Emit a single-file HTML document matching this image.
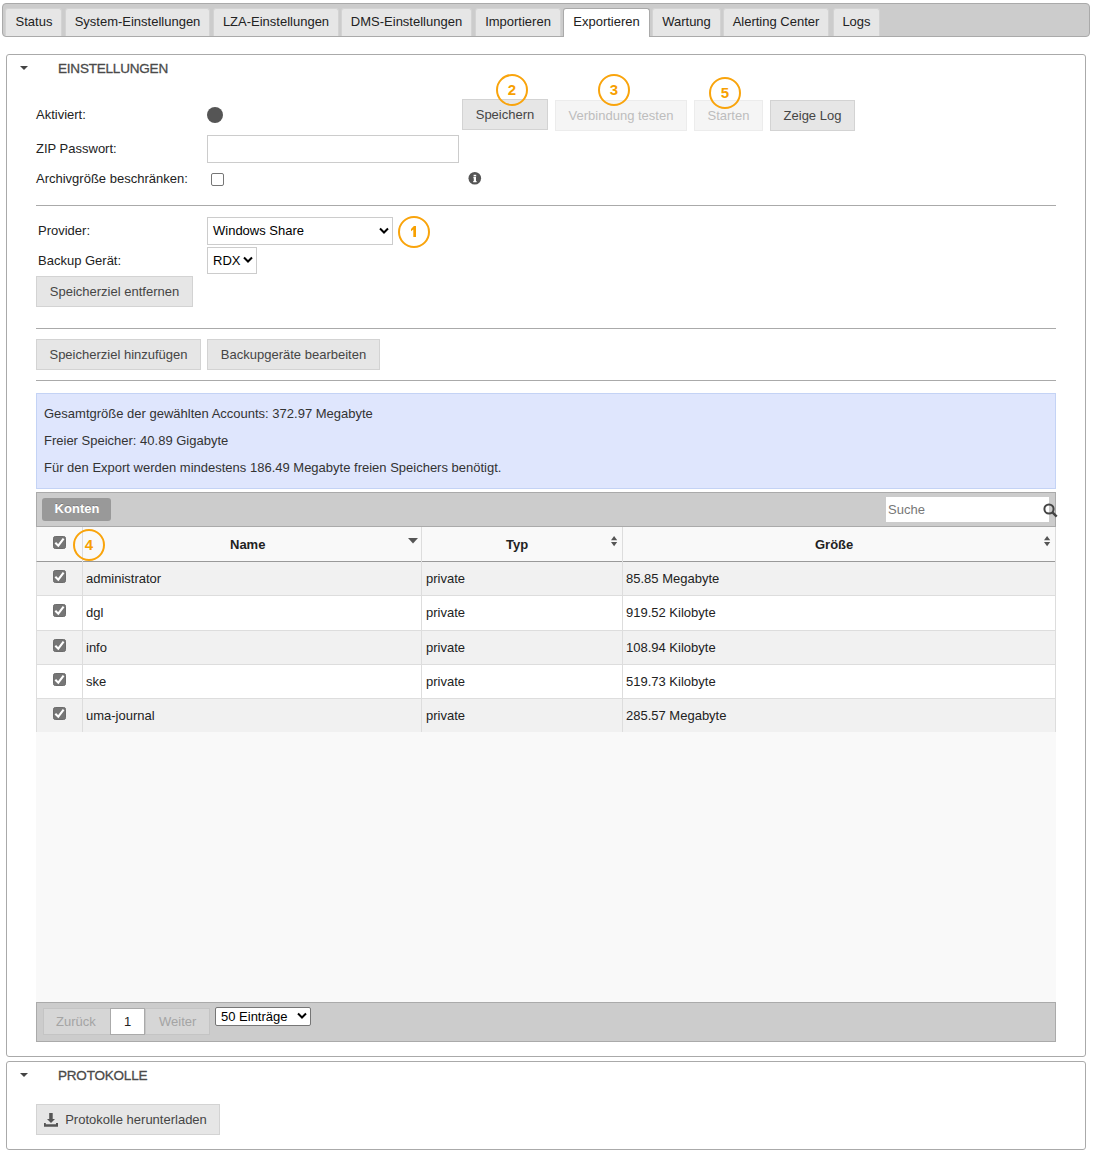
<!DOCTYPE html>
<html><head><meta charset="utf-8">
<style>
*{box-sizing:border-box;margin:0;padding:0}
html,body{width:1093px;height:1161px;overflow:hidden;background:#fff}
body{font-family:"Liberation Sans",sans-serif;font-size:13px;color:#222;position:relative}
.a{position:absolute}
.t{position:absolute;white-space:nowrap;line-height:15px}
#tabbar{left:2px;top:3px;width:1088px;height:34px;background:#ccc;border:1px solid #aaa;border-radius:4px}
.tab{position:absolute;top:8px;height:28px;background:#e6e6e6;border:1px solid #d3d3d3;border-bottom:0;border-radius:3px 3px 0 0;color:#222;text-align:center;line-height:15px;padding-top:5px;white-space:nowrap}
.tab.act{background:#fff;border-color:#aaa;height:29px}
.box{position:absolute;left:6px;width:1080px;border:1px solid #aaa;border-radius:3px;background:#fff}
.tri{position:absolute;width:0;height:0;border-left:4px solid transparent;border-right:4px solid transparent;border-top:4.5px solid #444}
.sect{position:absolute;font-size:13.5px;letter-spacing:-0.2px;-webkit-text-stroke:0.3px #4a4a4a;color:#4a4a4a;line-height:15px;white-space:nowrap}
.btn{position:absolute;background:#e6e6e6;border:1px solid #d3d3d3;color:#454545;text-align:center;line-height:15px;white-space:nowrap;padding-top:7px}
.btn.dis{background:#f5f5f5;border-color:#ececec;color:#bdbdbd}
.hr{position:absolute;left:36px;width:1020px;height:1px;background:#aaa}
.ann{position:absolute;width:32px;height:32px;border:2px solid #f9a40c;border-radius:50%;color:#f7a000;font-weight:bold;font-size:15px;text-align:center;line-height:28px}
.inp{position:absolute;background:#fff;border:1px solid #ccc}
.sel{position:absolute;background:#fff;border:1px solid #ccc;color:#000;line-height:15px;white-space:nowrap}
.chev{position:absolute}
.row{position:absolute;left:36px;width:1020px;height:34px}
.cb{position:absolute;width:13px;height:13px;background:#6f6f6f;border-radius:2px}
.cell{position:absolute;white-space:nowrap;line-height:15px;color:#222}
.vsep{position:absolute;width:1px;background:#ddd}
</style></head><body>

<!-- Tab bar -->
<div id="tabbar" class="a"></div>
<div class="tab" style="left:5px;width:57px;padding-left:1px">Status</div>
<div class="tab" style="left:65px;width:145px">System-Einstellungen</div>
<div class="tab" style="left:213px;width:126px">LZA-Einstellungen</div>
<div class="tab" style="left:341px;width:131px">DMS-Einstellungen</div>
<div class="tab" style="left:475px;width:86px">Importieren</div>
<div class="tab act" style="left:563px;width:87px">Exportieren</div>
<div class="tab" style="left:652px;width:69px">Wartung</div>
<div class="tab" style="left:723px;width:106px">Alerting Center</div>
<div class="tab" style="left:833px;width:47px">Logs</div>

<!-- Section 1 -->
<div class="box" style="top:54px;height:1003px"></div>
<div class="tri" style="left:20px;top:66px"></div>
<div class="sect" style="left:58px;top:61px">EINSTELLUNGEN</div>

<div class="t" style="left:36px;top:107px">Aktiviert:</div>
<div class="a" style="left:207px;top:107px;width:16px;height:16px;border-radius:50%;background:#555"></div>
<div class="t" style="left:36px;top:141px">ZIP Passwort:</div>
<div class="inp" style="left:207px;top:135px;width:252px;height:28px"></div>
<div class="t" style="left:36px;top:171px">Archivgröße beschränken:</div>
<div class="a" style="left:211px;top:173px;width:13px;height:13px;border:1px solid #767676;border-radius:2px;background:#fff"></div>
<svg class="a" style="left:468px;top:171px" width="14" height="14" viewBox="0 0 14 14"><circle cx="6.8" cy="7.2" r="6.3" fill="#555"/><rect x="5.6" y="3.8" width="2.6" height="1.6" fill="#fff"/><path d="M5.4 6h2.6v3.9h0.6v1.3H5.2V9.9h0.6V7.2h-0.4z" fill="#fff"/></svg>

<div class="btn" style="left:462px;top:99px;width:86px;height:31px">Speichern</div>
<div class="btn dis" style="left:555px;top:100px;width:132px;height:31px">Verbindung testen</div>
<div class="btn dis" style="left:694px;top:100px;width:69px;height:31px">Starten</div>
<div class="btn" style="left:770px;top:100px;width:85px;height:31px">Zeige Log</div>

<div class="hr" style="top:205px"></div>

<div class="t" style="left:38px;top:223px">Provider:</div>
<div class="sel" style="left:207px;top:217px;width:186px;height:28px;padding:5px 0 0 5px">Windows Share</div>
<svg class="a" style="left:379px;top:227px" width="10" height="8" viewBox="0 0 10 8"><path d="M1 1.5l4 4 4-4" fill="none" stroke="#000" stroke-width="2"/></svg>
<div class="t" style="left:38px;top:253px">Backup Gerät:</div>
<div class="sel" style="left:207px;top:247px;width:50px;height:27px;padding:5px 0 0 5px">RDX</div>
<svg class="a" style="left:243px;top:256px" width="10" height="8" viewBox="0 0 10 8"><path d="M1 1.5l4 4 4-4" fill="none" stroke="#000" stroke-width="2"/></svg>
<div class="btn" style="left:36px;top:276px;width:157px;height:31px">Speicherziel entfernen</div>

<div class="hr" style="top:328px"></div>
<div class="btn" style="left:36px;top:339px;width:165px;height:31px">Speicherziel hinzufügen</div>
<div class="btn" style="left:207px;top:339px;width:173px;height:31px">Backupgeräte bearbeiten</div>
<div class="hr" style="top:380px"></div>

<!-- Info box -->
<div class="a" style="left:36px;top:393px;width:1020px;height:96px;background:#dfe6fd;border:1px solid #c4d3f5"></div>
<div class="t" style="left:44px;top:406px;color:#333">Gesamtgröße der gewählten Accounts: 372.97 Megabyte</div>
<div class="t" style="left:44px;top:433px;color:#333">Freier Speicher: 40.89 Gigabyte</div>
<div class="t" style="left:44px;top:460px;color:#333">Für den Export werden mindestens 186.49 Megabyte freien Speichers benötigt.</div>

<!-- Table toolbar -->
<div class="a" style="left:36px;top:492px;width:1020px;height:35px;background:#ccc;border:1px solid #aaa"></div>
<div class="a" style="left:42px;top:498px;width:69px;height:23px;background:#999;border-radius:3px;color:#fff;font-weight:bold;text-align:center;line-height:15px;padding-top:3px;padding-left:1px;text-shadow:0 -1px 0 rgba(0,0,0,.2)">Konten</div>
<div class="a" style="left:886px;top:497px;width:163px;height:25px;background:#fff"></div>
<div class="t" style="left:888px;top:502px;color:#777">Suche</div>
<svg class="a" style="left:1043px;top:503px" width="16" height="15" viewBox="0 0 16 15"><circle cx="6" cy="6" r="4.6" fill="none" stroke="#444" stroke-width="2"/><path d="M9.2 9.2l4.5 4.5" stroke="#444" stroke-width="2.4"/></svg>

<!-- Header -->
<div class="a" style="left:36px;top:527px;width:1020px;height:35px;background:#f9f9f9;border-bottom:1px solid #999;border-left:1px solid #ddd"></div>
<svg class="a" style="left:53px;top:536px" width="13" height="13" viewBox="0 0 13 13"><rect x="0.5" y="0.5" width="12" height="12" rx="1.8" fill="#767676" stroke="#6c6c6c"/><path d="M2.3 6.7l3 3L10.6 2.7" fill="none" stroke="#fff" stroke-width="2.1"/></svg>
<div class="t" style="left:230px;top:537px;font-weight:bold">Name</div>
<div class="t" style="left:506px;top:537px;font-weight:bold">Typ</div>
<div class="t" style="left:815px;top:537px;font-weight:bold">Größe</div>


<svg class="a" style="left:408px;top:538px" width="10" height="6" viewBox="0 0 10 6"><path d="M0 0h10L5 5.4z" fill="#555"/></svg>
<svg class="a" style="left:611px;top:535px" width="7" height="12" viewBox="0 0 7 12"><path d="M0 5.2L3.1 1 6.2 5.2z M0 7H6.2L3.1 11.2z" fill="#555"/></svg>
<svg class="a" style="left:1044px;top:535px" width="7" height="12" viewBox="0 0 7 12"><path d="M0 5.2L3.1 1 6.2 5.2z M0 7H6.2L3.1 11.2z" fill="#555"/></svg>
<!-- rows -->
<div class="a" style="left:36px;top:562px;width:1020px;height:34px;background:#f1f1f1;border-bottom:1px solid #ddd;border-left:1px solid #ddd"></div>
<div class="a" style="left:36px;top:596px;width:1020px;height:35px;background:#fff;border-bottom:1px solid #ddd;border-left:1px solid #ddd"></div>
<div class="a" style="left:36px;top:631px;width:1020px;height:34px;background:#f1f1f1;border-bottom:1px solid #ddd;border-left:1px solid #ddd"></div>
<div class="a" style="left:36px;top:665px;width:1020px;height:34px;background:#fff;border-bottom:1px solid #ddd;border-left:1px solid #ddd"></div>
<div class="a" style="left:36px;top:699px;width:1020px;height:33px;background:#f1f1f1;border-left:1px solid #ddd"></div>
<div class="a" style="left:36px;top:732px;width:1020px;height:270px;background:#f9f9f9"></div>

<div class="vsep" style="left:82px;top:527px;height:205px"></div>
<div class="vsep" style="left:421px;top:527px;height:205px"></div>
<div class="vsep" style="left:622px;top:527px;height:205px"></div>
<svg class="a" style="left:53px;top:570px" width="13" height="13" viewBox="0 0 13 13"><rect x="0.5" y="0.5" width="12" height="12" rx="1.8" fill="#767676" stroke="#6c6c6c"/><path d="M2.3 6.7l3 3L10.6 2.7" fill="none" stroke="#fff" stroke-width="2.1"/></svg>
<div class="cell" style="left:86px;top:571px">administrator</div>
<div class="cell" style="left:426px;top:571px">private</div>
<div class="cell" style="left:626px;top:571px">85.85 Megabyte</div>
<svg class="a" style="left:53px;top:604px" width="13" height="13" viewBox="0 0 13 13"><rect x="0.5" y="0.5" width="12" height="12" rx="1.8" fill="#767676" stroke="#6c6c6c"/><path d="M2.3 6.7l3 3L10.6 2.7" fill="none" stroke="#fff" stroke-width="2.1"/></svg>
<div class="cell" style="left:86px;top:605px">dgl</div>
<div class="cell" style="left:426px;top:605px">private</div>
<div class="cell" style="left:626px;top:605px">919.52 Kilobyte</div>
<svg class="a" style="left:53px;top:639px" width="13" height="13" viewBox="0 0 13 13"><rect x="0.5" y="0.5" width="12" height="12" rx="1.8" fill="#767676" stroke="#6c6c6c"/><path d="M2.3 6.7l3 3L10.6 2.7" fill="none" stroke="#fff" stroke-width="2.1"/></svg>
<div class="cell" style="left:86px;top:640px">info</div>
<div class="cell" style="left:426px;top:640px">private</div>
<div class="cell" style="left:626px;top:640px">108.94 Kilobyte</div>
<svg class="a" style="left:53px;top:673px" width="13" height="13" viewBox="0 0 13 13"><rect x="0.5" y="0.5" width="12" height="12" rx="1.8" fill="#767676" stroke="#6c6c6c"/><path d="M2.3 6.7l3 3L10.6 2.7" fill="none" stroke="#fff" stroke-width="2.1"/></svg>
<div class="cell" style="left:86px;top:674px">ske</div>
<div class="cell" style="left:426px;top:674px">private</div>
<div class="cell" style="left:626px;top:674px">519.73 Kilobyte</div>
<svg class="a" style="left:53px;top:707px" width="13" height="13" viewBox="0 0 13 13"><rect x="0.5" y="0.5" width="12" height="12" rx="1.8" fill="#767676" stroke="#6c6c6c"/><path d="M2.3 6.7l3 3L10.6 2.7" fill="none" stroke="#fff" stroke-width="2.1"/></svg>
<div class="cell" style="left:86px;top:708px">uma-journal</div>
<div class="cell" style="left:426px;top:708px">private</div>
<div class="cell" style="left:626px;top:708px">285.57 Megabyte</div>

<div class="vsep" style="left:1055px;top:527px;height:205px"></div>
<!-- Footer -->
<div class="a" style="left:36px;top:1002px;width:1020px;height:40px;background:#ccc;border:1px solid #aaa"></div>
<div class="a" style="left:43px;top:1008px;width:68px;height:27px;background:#d6d6d6;border:1px solid #c4c4c4"></div>
<div class="t" style="left:56px;top:1009px;color:#a4a4a4;padding-top:5px">Zurück</div>
<div class="a" style="left:110px;top:1008px;width:35px;height:27px;background:#fff;border:1px solid #aaa;text-align:center;line-height:15px;padding-top:5px;color:#222">1</div>
<div class="a" style="left:145px;top:1008px;width:65px;height:27px;background:#d6d6d6;border:1px solid #c4c4c4"></div>
<div class="t" style="left:159px;top:1009px;color:#a4a4a4;padding-top:5px">Weiter</div>
<div class="sel" style="left:215px;top:1007px;width:96px;height:19px;border:1px solid #767676;border-radius:2px;padding:1px 0 0 5px">50 Einträge</div>
<svg class="a" style="left:297px;top:1012px" width="10" height="8" viewBox="0 0 10 8"><path d="M1 1.5l4 4 4-4" fill="none" stroke="#000" stroke-width="2"/></svg>

<!-- Section 2 -->
<div class="box" style="top:1061px;height:89px"></div>
<div class="tri" style="left:20px;top:1073px"></div>
<div class="sect" style="left:58px;top:1068px">PROTOKOLLE</div>
<div class="btn" style="left:36px;top:1104px;width:184px;height:31px;padding-left:16px">Protokolle herunterladen</div>

<svg class="a" style="left:44px;top:1112px" width="14" height="15" viewBox="0 0 14 15"><path d="M5.2 1h3.5v6H11L7 11 3 7h2.2z" fill="#555"/><path d="M0 11h1.8v1.2h10.2V11H14v3.7H0z" fill="#555"/></svg>
<!-- annotations -->
<div class="ann" style="left:496px;top:74px">2</div>
<div class="ann" style="left:598px;top:74px">3</div>
<div class="ann" style="left:709px;top:77px">5</div>
<div class="ann" style="left:398px;top:216px"></div>
<svg class="a" style="left:398px;top:216px" width="32" height="32" viewBox="398 216 32 32"><path d="M413.3 237V229.6L411 231.3V229L413.9 226H416V237Z" fill="#f7a000"/></svg>
<div class="ann" style="left:73px;top:529px">4</div>
</body></html>
